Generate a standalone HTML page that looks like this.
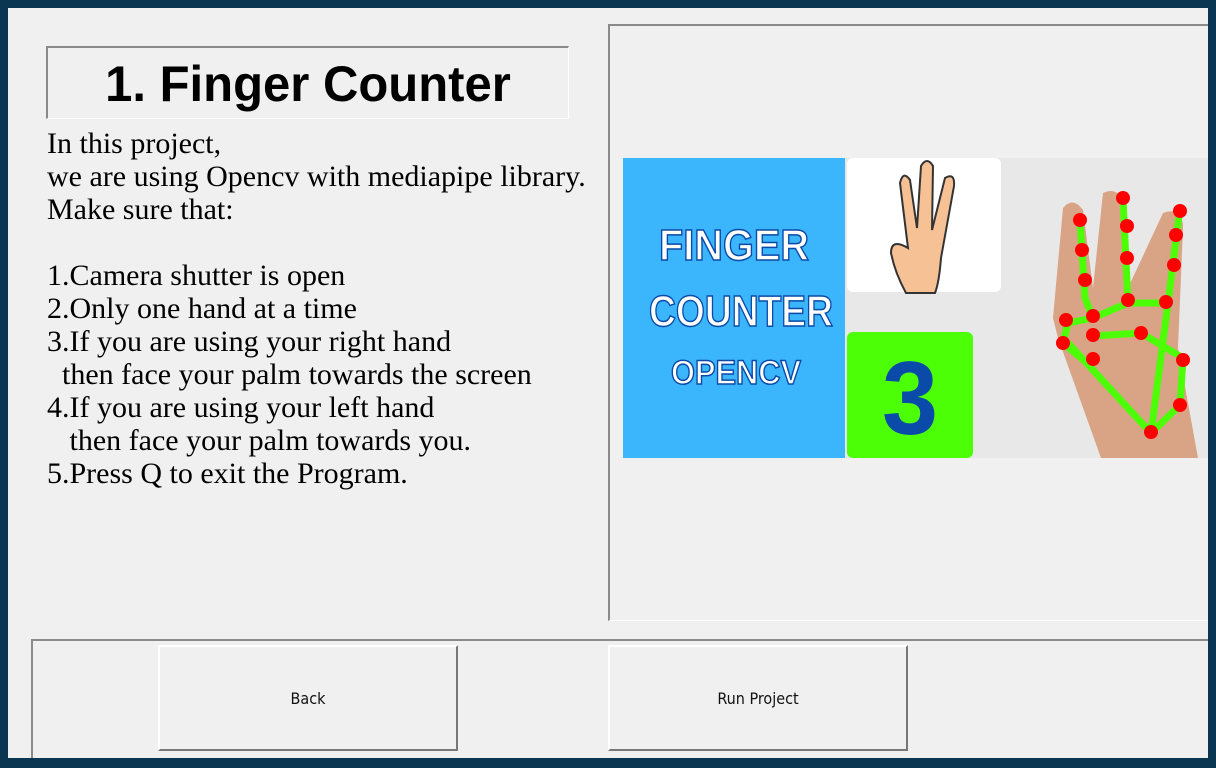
<!DOCTYPE html>
<html><head><style>
body{margin:0;width:1216px;height:768px;background:#0b3651;position:relative;overflow:hidden}
#win{position:absolute;left:8px;top:8px;width:1200px;height:750px;background:#f0f0f0;overflow:hidden}
.abs{position:absolute}
#title{left:38px;top:38px;width:520px;height:70px;border-top:2px solid #8a8a8a;border-left:2px solid #8a8a8a;border-right:1px solid #fff;border-bottom:1px solid #fff;font:bold 50px "Liberation Sans",sans-serif;text-align:center;line-height:72px;color:#000}
#title span{display:inline-block;transform:scaleX(0.98)}
#txt{left:39px;top:119px;font:30px/33px "Liberation Serif",serif;color:#000;white-space:pre}
#rf{left:600px;top:16px;width:620px;height:594px;border-top:2px solid #8a8a8a;border-left:2px solid #8a8a8a;border-bottom:1px solid #fff}
#bf{left:23px;top:631px;width:1200px;height:140px;border-top:2px solid #8a8a8a;border-left:2px solid #8a8a8a}
.btn{top:637px;border-top:2px solid #fff;border-left:2px solid #fff;border-right:2px solid #777;border-bottom:2px solid #777;font:16px "DejaVu Sans Condensed","DejaVu Sans",sans-serif;text-align:center;line-height:103px;color:#111;box-sizing:border-box;width:300px;height:106px}
</style></head><body>
<div id="win">
<div id="title" class="abs"><span>1. Finger Counter</span></div>
<div id="txt" class="abs">In this project,
we are using Opencv with mediapipe library.
Make sure that:

1.Camera shutter is open
2.Only one hand at a time
3.If you are using your right hand
  then face your palm towards the screen
4.If you are using your left hand
   then face your palm towards you.
5.Press Q to exit the Program.</div>
<div id="rf" class="abs"></div>
<svg class="abs" style="left:615px;top:150px" width="585" height="300" viewBox="0 0 585 300">
<rect width="585" height="300" fill="#e8e8e8"/>
<rect width="222" height="300" fill="#3bb5fc"/>
<rect x="224" y="0" width="154" height="134" rx="6" fill="#fff"/>
<rect x="224" y="174" width="126" height="126" rx="6" fill="#4cff06"/>
<text x="287" y="276" font-family="Liberation Sans" font-weight="bold" font-size="104" fill="#0a4aa8" text-anchor="middle" textLength="56" lengthAdjust="spacingAndGlyphs">3</text>
<g font-family="Liberation Sans" font-weight="bold" fill="#fff" stroke="#0a4aa8" stroke-width="1.5">
<text x="36" y="102" font-size="44" textLength="150" lengthAdjust="spacingAndGlyphs">FINGER</text>
<text x="26" y="168" font-size="44" textLength="184" lengthAdjust="spacingAndGlyphs">COUNTER</text>
<text x="48" y="226" font-size="34" textLength="130" lengthAdjust="spacingAndGlyphs">OPENCV</text></g>
<path d="M285 90 L277 25 Q280 12 287 22 L294 70 L298 8 Q304 -2 310 8 L309 72 L322 20 Q332 14 331 28 L318 100 Q316 125 312 135 L283 135 Q272 115 268 95 Q268 80 285 90 Z" fill="#f6c195" stroke="#333" stroke-width="2"/>
<path d="M478 300 L435 180 L430 160 L440 50 Q450 38 460 52 L470 130 L480 35 Q495 28 500 45 L505 130 L540 55 Q560 48 560 70 L555 190 L575 300 Z" fill="#d9a486"/>
<g stroke="#4cff06" stroke-width="7" fill="none">
<path d="M457 62 L462 140 L470 160 L505 145 L500 40 M505 145 L545 145 L557 50 M470 160 L445 165 L440 185 L470 210 M470 178 L518 175 L560 200 L557 247 L528 275 L445 185 M528 275 L545 145"/></g>
<g fill="#f00">
<circle cx="457" cy="62" r="7"/><circle cx="459" cy="92" r="7"/><circle cx="462" cy="122" r="7"/><circle cx="470" cy="158" r="7"/>
<circle cx="500" cy="40" r="7"/><circle cx="504" cy="68" r="7"/><circle cx="504" cy="100" r="7"/><circle cx="505" cy="142" r="7"/>
<circle cx="557" cy="53" r="7"/><circle cx="553" cy="77" r="7"/><circle cx="551" cy="107" r="7"/><circle cx="543" cy="144" r="7"/>
<circle cx="443" cy="162" r="7"/><circle cx="440" cy="185" r="7"/><circle cx="470" cy="177" r="7"/><circle cx="518" cy="175" r="7"/>
<circle cx="470" cy="201" r="7"/><circle cx="560" cy="202" r="7"/><circle cx="557" cy="247" r="7"/><circle cx="528" cy="274" r="7"/></g>
</svg>
<div id="bf" class="abs"></div>
<div class="abs btn" style="left:150px">Back</div>
<div class="abs btn" style="left:600px">Run Project</div>
</div>
</body></html>
